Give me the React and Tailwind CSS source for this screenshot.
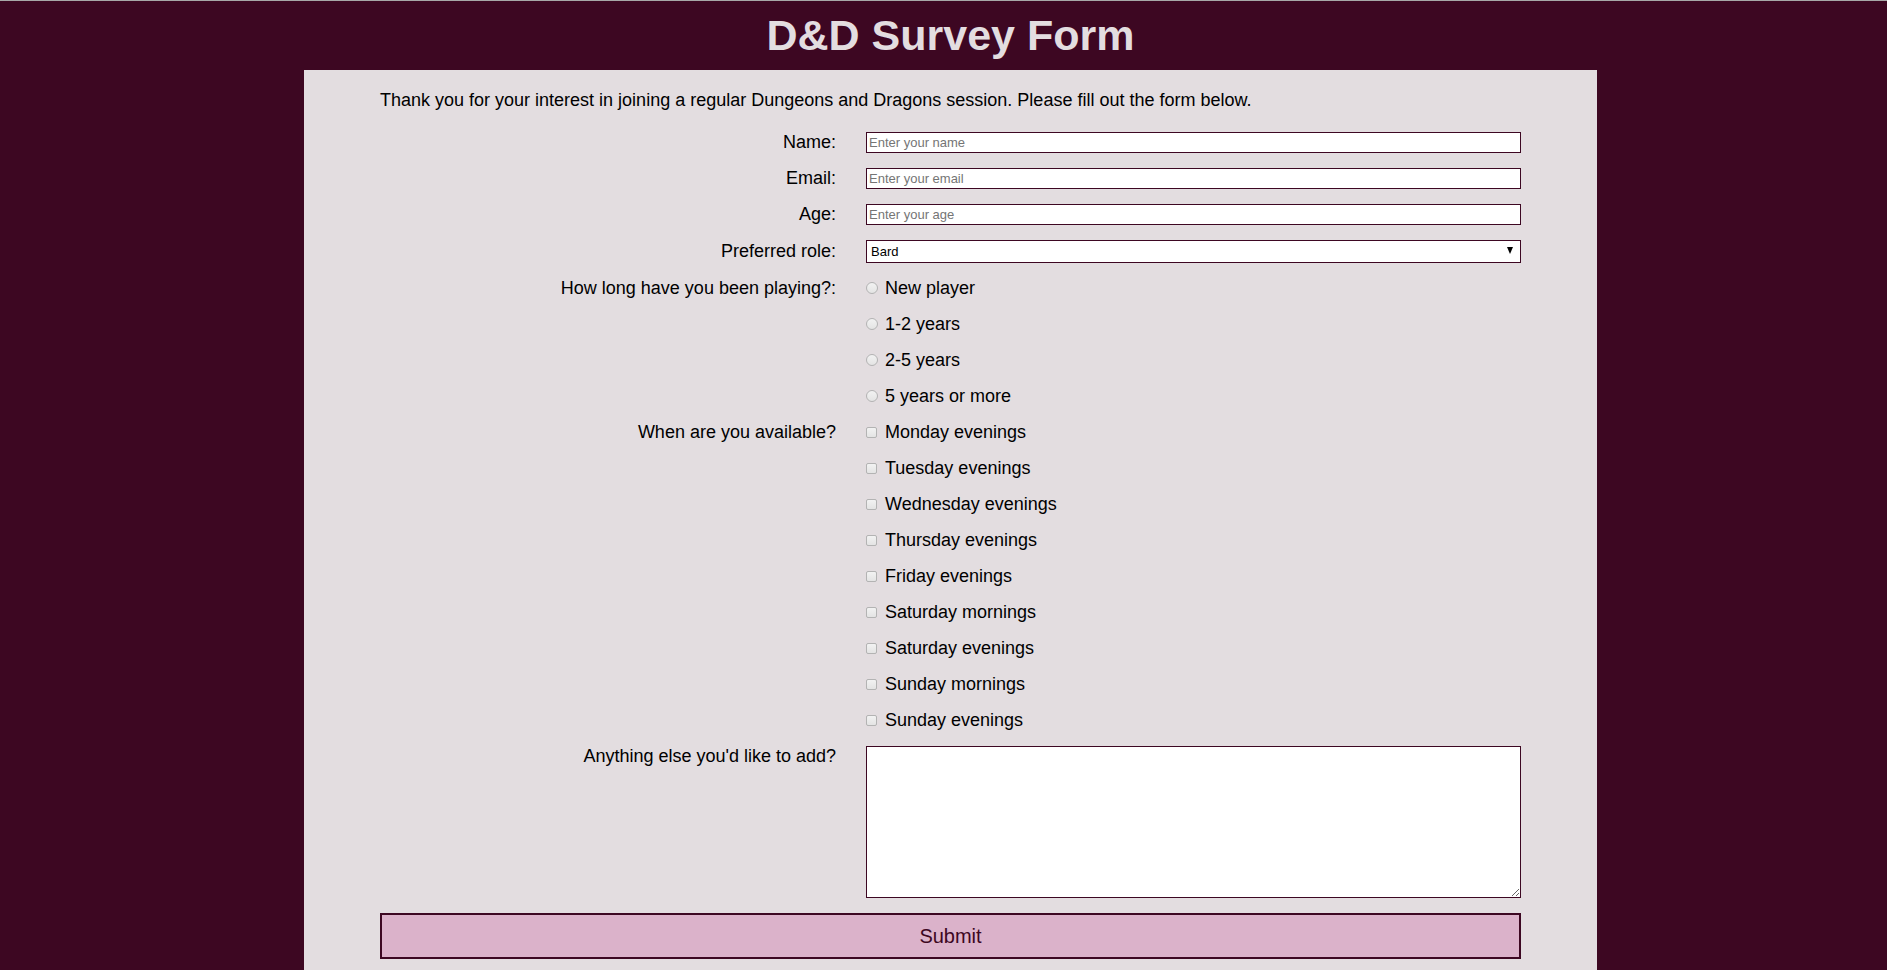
import React from 'react';

const roles = ['Bard', 'Barbarian', 'Cleric', 'Druid', 'Fighter', 'Monk', 'Paladin', 'Ranger', 'Rogue', 'Sorcerer', 'Warlock', 'Wizard'];
const experience = ['New player', '1-2 years', '2-5 years', '5 years or more'];
const slots = [
  'Monday evenings',
  'Tuesday evenings',
  'Wednesday evenings',
  'Thursday evenings',
  'Friday evenings',
  'Saturday mornings',
  'Saturday evenings',
  'Sunday mornings',
  'Sunday evenings',
];

function Label({ children, top }) {
  return (
    <label className={`text-right text-[18px] leading-[21px] text-black ${top ? 'self-start' : 'self-center'}`}>
      {children}
    </label>
  );
}

function TextField({ placeholder }) {
  return (
    <input
      type="text"
      placeholder={placeholder}
      className="w-full h-[21px] bg-white border border-[#3d0722] px-[2px] text-[13px] text-black placeholder-[#757575] outline-none"
    />
  );
}

function Choice({ type, name, label }) {
  const box =
    type === 'radio'
      ? 'rounded-full w-[12px] h-[12px] mr-[7px]'
      : 'rounded-[2px] w-[11px] h-[11px] mr-[8px]';
  return (
    <label className="flex items-center h-[36px] text-[18px] text-black">
      <input
        type={type}
        name={name}
        className={`appearance-none border border-[#b3b3b3] bg-gradient-to-b from-[#f2f2f2] to-[#e4e4e4] ${box}`}
      />
      {label}
    </label>
  );
}

export default function App() {
  return (
    <div
      className="min-h-screen bg-[#3d0722] border-t border-[#a8a8a8]"
      style={{ fontFamily: '"Liberation Sans", Arial, sans-serif' }}
    >
      <h1 className="text-center text-[43px] font-bold leading-[50px] text-[#e3dde0] pt-[9px] pb-[10px] pl-[14px]">
        D&amp;D Survey Form
      </h1>

      <div className="ml-[304px] w-[1293px] bg-[#e3dde0] px-[76px] pt-[20px] pb-[16px]">
        <p className="text-[18px] leading-[21px] text-black">
          Thank you for your interest in joining a regular Dungeons and Dragons session. Please fill out the form below.
        </p>

        <form className="mt-[13px]" onSubmit={(e) => e.preventDefault()}>
          <div className="grid grid-cols-[456px_655px] gap-x-[30px]">
            <div className="h-[36px] flex items-center justify-end"><Label>Name:</Label></div>
            <div className="h-[36px] flex items-center"><TextField placeholder="Enter your name" /></div>

            <div className="h-[36px] flex items-center justify-end"><Label>Email:</Label></div>
            <div className="h-[36px] flex items-center"><TextField placeholder="Enter your email" /></div>

            <div className="h-[36px] flex items-center justify-end"><Label>Age:</Label></div>
            <div className="h-[36px] flex items-center"><TextField placeholder="Enter your age" /></div>

            <div className="h-[38px] flex items-center justify-end"><Label>Preferred role:</Label></div>
            <div className="h-[38px] flex items-center">
              <div className="relative w-full">
                <select className="appearance-none w-full h-[23px] bg-white border border-[#3d0722] pl-[4px] text-[13px] text-black outline-none">
                  {roles.map((r) => (
                    <option key={r}>{r}</option>
                  ))}
                </select>
                <span className="pointer-events-none absolute right-[8px] top-[8px] w-0 h-0 border-l-[3px] border-r-[3px] border-t-[7px] border-l-transparent border-r-transparent border-t-black" />
              </div>
            </div>

            <div className="h-[36px] flex items-center justify-end"><Label>How long have you been playing?:</Label></div>
            <div className="flex flex-col">
              {experience.map((x) => (
                <Choice key={x} type="radio" name="experience" label={x} />
              ))}
            </div>

            <div className="h-[36px] flex items-center justify-end"><Label>When are you available?</Label></div>
            <div className="flex flex-col">
              {slots.map((s) => (
                <Choice key={s} type="checkbox" name="slots" label={s} />
              ))}
            </div>

            <div className="flex justify-end mt-[8px]"><Label top>Anything else you'd like to add?</Label></div>
            <div className="mt-[8px]">
              <textarea className="block w-full h-[152px] bg-white border border-[#3d0722] outline-none text-[13px]" />
            </div>
          </div>

          <button
            type="submit"
            className="mt-[15px] w-full h-[46px] bg-[#dbb2ca] border-2 border-[#3d0722] text-[20px] text-[#3d0722]"
          >
            Submit
          </button>
        </form>
      </div>
    </div>
  );
}
